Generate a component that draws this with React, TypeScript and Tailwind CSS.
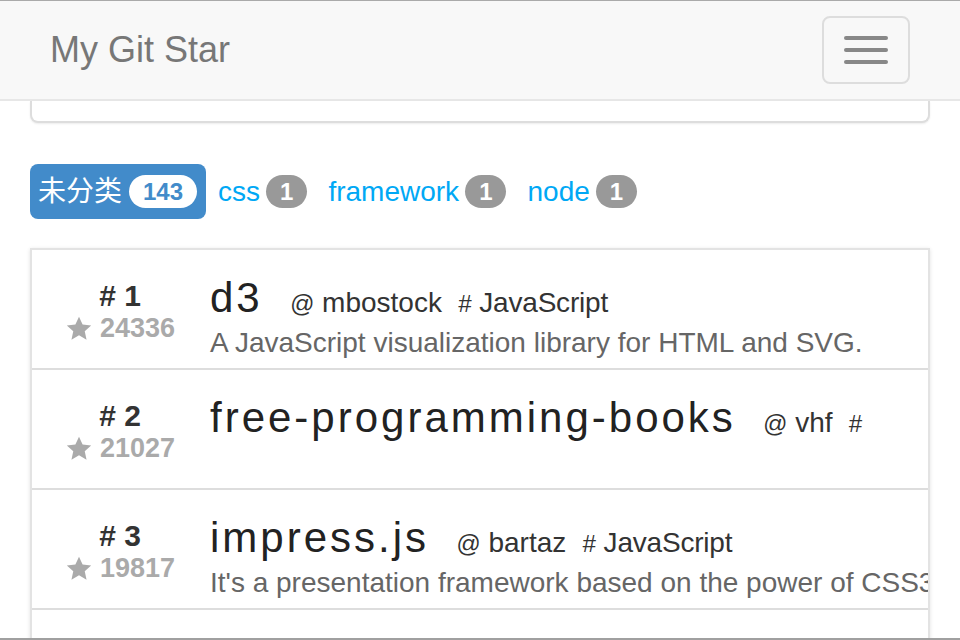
import React from "react";

type Repo = {
  name: string;
  owner: string;
  lang: string;
  stars: number;
  desc?: string;
};

const repos: Repo[] = [
  {
    name: "d3",
    owner: "mbostock",
    lang: "JavaScript",
    stars: 24336,
    desc: "A JavaScript visualization library for HTML and SVG.",
  },
  { name: "free-programming-books", owner: "vhf", lang: "", stars: 21027 },
  {
    name: "impress.js",
    owner: "bartaz",
    lang: "JavaScript",
    stars: 19817,
    desc: "It's a presentation framework based on the power of CSS3 transforms and transitions in modern browsers and inspired by the idea behind prezi.com.",
  },
  {
    name: "bootstrap",
    owner: "twbs",
    lang: "CSS",
    stars: 19002,
    desc: "The most popular front-end framework for developing responsive, mobile first projects on the web.",
  },
];

const tags = [
  { name: "css", count: 1 },
  { name: "framework", count: 1 },
  { name: "node", count: 1 },
];

function Star() {
  return (
    <svg width="28" height="27" viewBox="0 0 24 24" className="shrink-0">
      <path
        fill="#aaaaaa"
        d="M12 1.5l3.2 7 7.6.8-5.7 5.1 1.6 7.5L12 18l-6.7 3.9 1.6-7.5L1.2 9.3l7.6-.8z"
      />
    </svg>
  );
}

function RepoRow({ repo, rank }: { repo: Repo; rank: number }) {
  return (
    <div className="flex h-[120px] border-b-[2px] border-[#dddddd]">
      {/* rank + stars */}
      <div className="w-[176px] shrink-0 pt-[30px] text-center">
        <div className="text-[30px] leading-[32px] font-bold text-[#333333]">
          # {rank}
        </div>
        <div className="flex items-center justify-center gap-[7px] text-[27px] leading-[32px] font-bold text-[#aaaaaa]">
          <Star />
          <span>{repo.stars}</span>
        </div>
      </div>

      {/* title + description */}
      <div className="flex-1 min-w-0 pl-[2px] pt-[23px] whitespace-nowrap overflow-hidden">
        <div className="leading-[50px] text-[#333333]">
          <span className="text-[42px] tracking-[3px] text-[#222222]">
            {repo.name}
          </span>
          <span className="ml-[27px] text-[24px] italic">@</span>
          <span className="ml-[8px] text-[28px]">{repo.owner}</span>
          <span className="ml-[16px] text-[24px] italic">#</span>
          {repo.lang && (
            <span className="ml-[8px] text-[28px] tracking-[-0.2px]">
              {repo.lang}
            </span>
          )}
        </div>
        {repo.desc && (
          <div className="-mt-[7px] text-[28px] leading-[36px] text-[#666666]">
            {repo.desc}
          </div>
        )}
      </div>
    </div>
  );
}

export default function App() {
  return (
    <div className="w-[960px] h-[640px] overflow-hidden bg-white border-t border-b-[2px] border-t-[#aaaaaa] border-b-[#a0a0a0] font-['Liberation_Sans','Noto_Sans_CJK_SC',sans-serif]">
      {/* Navbar */}
      <nav className="h-[100px] flex items-center justify-between bg-[#f8f8f8] border-b-[2px] border-[#e7e7e7] pl-[50px] pr-[50px]">
        <span className="text-[36px] leading-[40px] text-[#777777]">
          My Git Star
        </span>
        <button className="w-[88px] h-[68px] flex flex-col items-center justify-center gap-[8px] border-[2px] border-[#dddddd] rounded-[8px]">
          <span className="block w-[44px] h-[4px] rounded-[2px] bg-[#888888]" />
          <span className="block w-[44px] h-[4px] rounded-[2px] bg-[#888888]" />
          <span className="block w-[44px] h-[4px] rounded-[2px] bg-[#888888]" />
        </button>
      </nav>

      {/* bottom of the panel scrolled under the navbar */}
      <div className="mx-[30px] h-[22px] bg-white border-x-[2px] border-b-[2px] border-[#dddddd] rounded-b-[8px] shadow-[0_1px_2px_rgba(0,0,0,0.08)]" />

      {/* Tags */}
      <div className="mt-[41px] mx-[30px] flex items-center">
        <div className="h-[55px] flex items-center gap-[7px] pl-[8px] pr-[9px] bg-[#428bca] rounded-[8px]">
          <span className="text-[28px] leading-[36px] text-white">未分类</span>
          <span className="h-[33px] px-[14px] flex items-center rounded-full bg-white text-[24px] font-bold text-[#428bca]">
            143
          </span>
        </div>
        {tags.map((t) => (
          <div
            key={t.name}
            className="flex items-center gap-[6px] pl-[12px] pr-[9px]"
          >
            <span className="text-[28px] leading-[36px] text-[#00a8f5]">
              {t.name}
            </span>
            <span className="h-[33px] px-[14px] flex items-center rounded-full bg-[#999999] text-[24px] font-bold text-white">
              {t.count}
            </span>
          </div>
        ))}
      </div>

      {/* Repo list */}
      <div className="mt-[29px] mx-[30px] bg-white border-[2px] border-[#e3e3e3] shadow-[0_1px_4px_rgba(0,0,0,0.12)]">
        {repos.map((r, i) => (
          <RepoRow key={r.name} repo={r} rank={i + 1} />
        ))}
      </div>
    </div>
  );
}
